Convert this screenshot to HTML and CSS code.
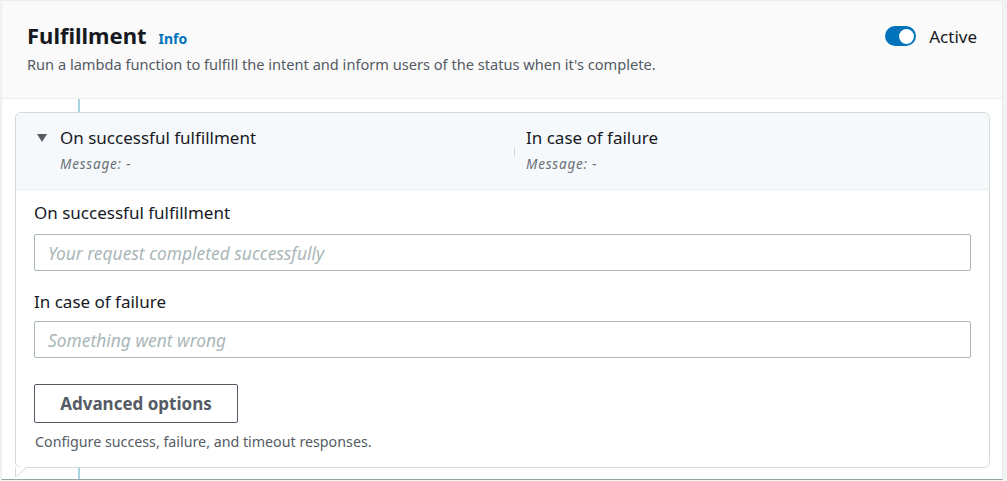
FILE: index.html
```html
<!DOCTYPE html>
<html lang="en">
<head>
<meta charset="utf-8">
<title>Fulfillment</title>
<link rel="stylesheet" href="styles.css">
</head>
<body>
<div class="panel">
  <header class="panel-header">
    <div class="heading">
      <div class="title-row">
        <h2 class="title">Fulfillment</h2>
        <a class="info" href="#">Info</a>
      </div>
      <p class="description">Run a lambda function to fulfill the intent and inform users of the status when it's complete.</p>
    </div>
    <label class="toggle">
      <span class="switch"><span class="knob"></span></span>
      <span class="toggle-label">Active</span>
    </label>
  </header>
  <div class="flow">
    <div class="connector top"></div>
    <section class="card">
      <div class="card-header">
        <div class="col col-left">
          <span class="caret"></span>
          <div>
            <div class="col-title">On successful fulfillment</div>
            <div class="col-msg">Message: -</div>
          </div>
        </div>
        <div class="col col-right">
          <span class="divider"></span>
          <div>
            <div class="col-title">In case of failure</div>
            <div class="col-msg">Message: -</div>
          </div>
        </div>
      </div>
      <div class="card-body">
        <label class="field-label">On successful fulfillment</label>
        <input class="field" type="text" placeholder="Your request completed successfully">
        <label class="field-label second">In case of failure</label>
        <input class="field" type="text" placeholder="Something went wrong">
        <button class="btn" type="button">Advanced options</button>
        <p class="hint">Configure success, failure, and timeout responses.</p>
      </div>
      <svg class="tail" width="13" height="11" viewBox="0 0 13 11"><path d="M0.5 0 V10 L12 0" fill="#fff" stroke="#d5dbdb" stroke-width="1"/></svg>
    </section>
    <div class="connector bottom"></div>
  </div>
</div>
</body>
</html>
```

FILE: styles.css
```css
* { box-sizing: border-box; }
html, body {
  margin: 0;
  padding: 0;
  height: 481px;
  overflow: hidden;
  background: #f2f3f3;
  font-family: "Noto Sans", "Open Sans", Arial, sans-serif;
  color: #16191f;
}
.panel {
  margin-left: 1px;
  width: 1002px;
  height: 480px;
  background: #fff;
  border: 1px solid #eaeded;
  border-bottom: 1px solid #95a5a6;
  overflow: hidden;
}
.panel-header {
  height: 98px;
  background: #fafafa;
  border-bottom: 1px solid #eaeded;
  display: flex;
  justify-content: space-between;
  padding: 19px 25px 0 25px;
}
.title-row {
  display: flex;
  align-items: baseline;
  gap: 12px;
}
.title {
  margin: 0;
  font-size: 22px;
  line-height: 30px;
  font-weight: 700;
  color: #16191f;
}
.info {
  font-size: 14px;
  font-weight: 700;
  color: #0073bb;
  text-decoration: none;
}
.description {
  margin: 4px 0 0;
  font-size: 14.6px;
  line-height: 20px;
  color: #545b64;
}
.toggle {
  display: flex;
  align-items: center;
  gap: 13px;
  height: 20px;
  margin-top: 6px;
}
.switch {
  width: 31px;
  height: 20px;
  border-radius: 10px;
  background: #0073bb;
  display: flex;
  align-items: center;
  justify-content: flex-end;
  padding-right: 2px;
}
.knob {
  width: 15px;
  height: 15px;
  border-radius: 50%;
  background: #fff;
}
.toggle-label {
  font-size: 17px;
  color: #16191f;
}
.flow {
  padding: 0 12px 0 13px;
}
.connector {
  width: 2px;
  margin-left: 63px;
  background: #a6d4dd;
}
.connector.top { height: 13px; }
.connector.bottom { height: 11px; }
.card {
  position: relative;
  height: 356px;
  border: 1px solid #d5dbdb;
  border-radius: 6px;
  background: #fff;
}
.card-header {
  height: 77px;
  background: #f6f9fb;
  border-bottom: 1px solid #eaeded;
  border-radius: 6px 6px 0 0;
  display: grid;
  grid-template-columns: 478px 1fr;
  padding: 14px 20px 0 20px;
}
.col { display: flex; align-items: flex-start; }
.caret {
  width: 0;
  height: 0;
  margin: 7px 13px 0 1px;
  border-left: 5.5px solid transparent;
  border-right: 5.5px solid transparent;
  border-top: 8px solid #545b64;
}
.divider {
  width: 1px;
  height: 10px;
  background: #d5dbdb;
  margin-right: 11px;
  margin-top: 20px;
}
.col-title {
  font-size: 17px;
  line-height: 22px;
  color: #16191f;
}
.col-msg {
  margin-top: 5px;
  font-size: 13.5px;
  letter-spacing: 0.8px;
  line-height: 20px;
  font-style: italic;
  color: #687078;
}
.card-body {
  padding: 12px 18px 0 18px;
  display: flex;
  flex-direction: column;
  align-items: flex-start;
}
.field-label {
  font-size: 17px;
  line-height: 22px;
  color: #16191f;
  margin-bottom: 10px;
}
.field-label.second { margin-top: 20px; margin-bottom: 8px; }
.field {
  width: 100%;
  height: 37px;
  border: 1px solid #aab7b8;
  border-radius: 2px;
  padding: 0 13px;
  font-family: inherit;
  font-size: 17.4px;
  color: #16191f;
  background: #fff;
}
.field::placeholder {
  color: #aab7b8;
  font-style: italic;
}
.btn {
  margin-top: 26px;
  width: 204px;
  height: 39px;
  border: 1px solid #545b64;
  border-radius: 2px;
  background: #fff;
  font-family: inherit;
  font-size: 17px;
  font-weight: 700;
  color: #545b64;
}
.hint {
  margin: 9px 0 0 1px;
  font-size: 14.25px;
  line-height: 20px;
  color: #545b64;
}
.tail {
  position: absolute;
  left: -1px;
  bottom: -11px;
}
```
